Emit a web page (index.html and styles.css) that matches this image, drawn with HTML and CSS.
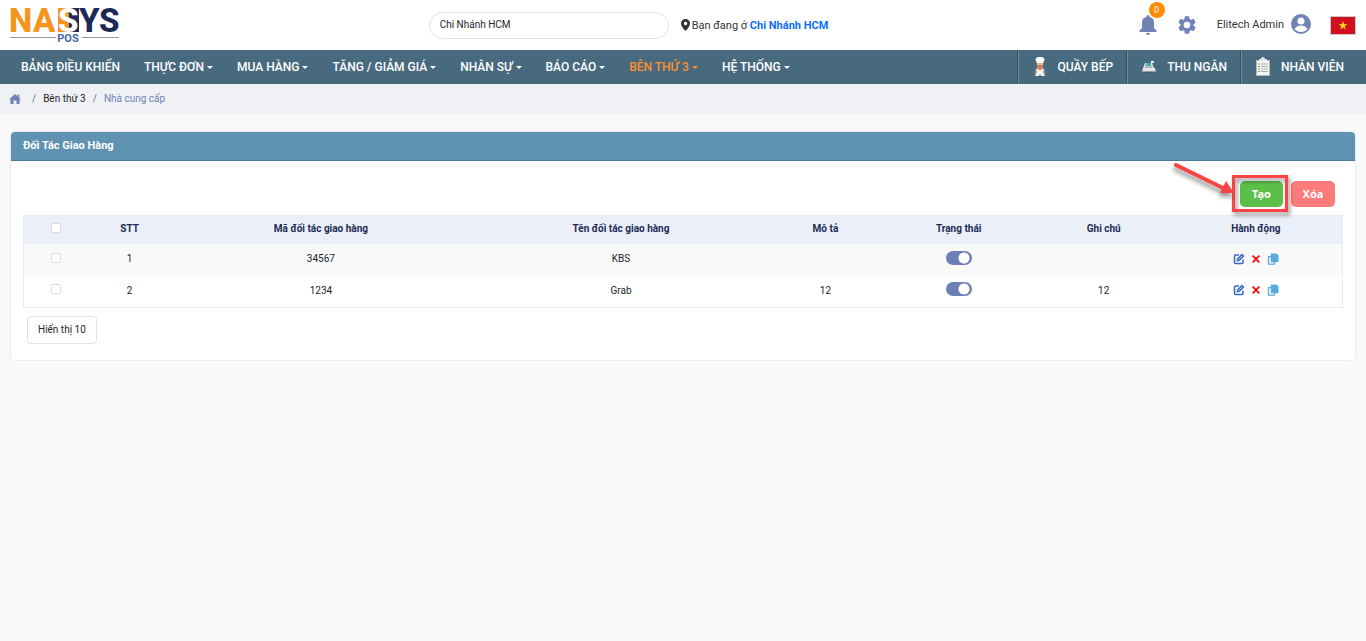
FILE: index.html
```html
<!DOCTYPE html>
<html lang="vi">
<head>
<meta charset="utf-8">
<meta name="viewport" content="width=device-width, initial-scale=1">
<title>Đối Tác Giao Hàng</title>
<link rel="stylesheet" href="styles.css">
</head>
<body>
<svg class="defs" width="0" height="0" aria-hidden="true">
  <symbol id="edit" viewBox="0 0 24 24"><path d="M12 4H5a2 2 0 0 0-2 2v13a2 2 0 0 0 2 2h13a2 2 0 0 0 2-2v-6" fill="none" stroke="currentColor" stroke-width="3"/><path d="M7 17l1-6L18 1l5 5-10 10z" fill="currentColor"/><path d="M10.500 13.500l8-8" stroke="#fff" stroke-width="1.500"/></symbol>
  <symbol id="cross" viewBox="0 0 24 24"><path d="M4 4l16 16M20 4L4 20" stroke="currentColor" stroke-width="4" fill="none"/></symbol>
  <symbol id="copy" viewBox="0 0 24 24"><path d="M8 7H3v15h12v-4" fill="none" stroke="currentColor" stroke-width="2.500" stroke-linejoin="round"/><path d="M9 1h10l4 4v12a1.500 1.500 0 0 1-1.500 1.500H9A1.500 1.500 0 0 1 7.500 17V2.500A1.500 1.500 0 0 1 9 1z" fill="currentColor"/></symbol>
</svg>
<header class="topbar">
  <a class="logo" href="#" aria-label="NASYS POS">
    <svg width="114" height="50" viewBox="0 0 114 50">
      <g class="logo-word">
        <text x="0" y="32" fill="#f7941d">N</text>
        <text x="24" y="32" fill="#f7941d">A</text>
        <path d="M49 8h11v24H49z" fill="#f7941d"/>
        <path d="M60 8h10v24H60z" fill="#1d2a57"/>
        <text x="49" y="32" fill="#fff">S</text>
        <text x="70" y="32" fill="#1d2a57">Y</text>
        <text x="90" y="32" fill="#1d2a57">S</text>
      </g>
      <path d="M1 37.500h46M73 37.500h37" stroke="#8e99ad"/>
      <text class="logo-sub" x="59" y="42" text-anchor="middle">POS</text>
    </svg>
  </a>
  <div class="branch">
    <input class="branch-input" type="text" value="Chi Nhánh HCM" aria-label="Chi nhánh">
    <svg class="pin" width="9" height="12" viewBox="0 0 18 24"><path fill-rule="evenodd" d="M9 0a9 9 0 0 1 9 9c0 6-9 15-9 15S0 15 0 9a9 9 0 0 1 9-9zm0 5.500a3.500 3.500 0 1 0 0 7 3.500 3.500 0 0 0 0-7z" fill="#333"/></svg>
    <span class="branch-note">Bạn đang ở <a href="#">Chi Nhánh HCM</a></span>
  </div>
  <div class="tools">
    <button class="icon-btn bell" type="button" aria-label="Thông báo">
      <svg width="18" height="20" viewBox="0 0 18 20"><path d="M9 0a1.500 1.500 0 0 1 1.500 1.500v.6A5.500 5.500 0 0 1 15 7.500V13l2.500 2.500V17H.5v-1.500L3 13V7.500a5.500 5.500 0 0 1 4.500-5.400v-.6A1.500 1.500 0 0 1 9 0zM7 18h4a2 2 0 0 1-4 0z" fill="#7082b8"/></svg>
      <span class="badge">0</span>
    </button>
    <button class="icon-btn" type="button" aria-label="Cài đặt">
      <svg width="22" height="22" viewBox="0 0 24 24"><path fill="#7082b8" d="M19.140 12.940c.04-.3.060-.61.060-.94 0-.32-.02-.64-.07-.94l2.030-1.580a.49.49 0 0 0 .12-.61l-1.920-3.320a.488.488 0 0 0-.59-.22l-2.390.96c-.5-.38-1.030-.7-1.620-.94L14.400 2.810a.484.484 0 0 0-.48-.41h-3.840c-.24 0-.43.17-.47.41L9.250 5.350c-.59.24-1.130.57-1.620.94l-2.390-.96a.49.49 0 0 0-.59.22L2.740 8.870c-.12.21-.08.47.12.61l2.030 1.580c-.05.3-.09.63-.09.94s.02.64.07.94l-2.030 1.580a.49.49 0 0 0-.12.61l1.920 3.320c.12.22.37.29.59.22l2.390-.96c.5.38 1.030.7 1.620.94l.36 2.540c.05.24.24.41.48.41h3.840c.24 0 .44-.17.47-.41l.36-2.540c.59-.24 1.130-.56 1.620-.94l2.390.96c.22.08.47 0 .59-.22l1.920-3.320a.49.49 0 0 0-.12-.61zM12 15.600a3.600 3.600 0 1 1 0-7.200 3.600 3.600 0 0 1 0 7.200z"/></svg>
    </button>
    <button class="user" type="button">Elitech Admin
      <svg width="20" height="20" viewBox="0 0 20 20"><circle cx="10" cy="10" r="10" fill="#7082b8"/><circle cx="10" cy="7" r="3.500" fill="#fff"/><path d="M3.500 15c1.500-2.500 4-3.500 6.500-3.500s5 1 6.500 3.500c-1.500 2-4 3-6.500 3s-5-1-6.500-3z" fill="#fff"/></svg>
    </button>
    <button class="icon-btn" type="button" aria-label="Tiếng Việt">
      <svg width="26" height="19" viewBox="0 0 26 19"><path d="M0 0h26v19H0z" fill="#c9c9cd"/><path d="M1 1h24v17H1z" fill="#d0101f"/><path d="M13 5l1.100 3.300h3.400l-2.800 2 1.100 3.300-2.800-2-2.800 2 1.100-3.300-2.800-2h3.400z" fill="#ffde17"/></svg>
    </button>
  </div>
</header>

<nav class="nav">
  <ul class="menu">
    <li><a href="#">BẢNG ĐIỀU KHIỂN</a></li>
    <li><a class="drop" href="#">THỰC ĐƠN</a></li>
    <li><a class="drop" href="#">MUA HÀNG</a></li>
    <li><a class="drop" href="#">TĂNG / GIẢM GIÁ</a></li>
    <li><a class="drop" href="#">NHÂN SỰ</a></li>
    <li><a class="drop" href="#">BÁO CÁO</a></li>
    <li><a class="drop active" href="#">BÊN THỨ 3</a></li>
    <li><a class="drop" href="#">HỆ THỐNG</a></li>
  </ul>
  <ul class="stations">
    <li><a href="#">
      <svg width="14" height="20" viewBox="0 0 14 20"><path d="M3.500 6V4.500A2 2 0 0 1 3.500 1a4.500 4.500 0 0 1 7 0 2 2 0 0 1 0 3.500V6z" fill="#fff"/><path d="M4 6h6v3.500a3 3 0 0 1-6 0z" fill="#f0b48a"/><path d="M4 8.500h6v1H4z" fill="#8a4b2a"/><path d="M3 12l4-1 4 1 .5 4.500h-9z" fill="#f3f3f3"/><path d="M4.500 10.500h5L7 13.500z" fill="#e5533d"/><path d="M2.500 12l1.500 2.500-1 2M11.500 12L10 14.500l1 2" stroke="#d98d62" fill="none"/><path d="M3 16h8l1 3H8l-1-1.500L6 19H2z" fill="#e9edf2"/></svg>
      QUẦY BẾP</a></li>
    <li><a href="#">
      <svg width="14" height="12" viewBox="0 0 14 12"><path d="M3 2h7l2 5H1z" fill="#d5dde2"/><path d="M4 2h5v3H4z" fill="#3fb7a3"/><path d="M9 0h3v2H9z" fill="#e8f3f2"/><path d="M3 6h7" stroke="#8f9da5"/><path d="M1 7h12l1 4H0z" fill="#e4e6e8"/><path d="M0 11h14" stroke="#4b5459"/></svg>
      THU NGÂN</a></li>
    <li><a href="#">
      <svg width="16" height="20" viewBox="0 0 16 20"><path d="M1 3h14v16H1z" fill="#b9b5ab"/><path d="M2 4h12v14H2z" fill="#f5f5f3"/><path d="M4 4V2h2a2 2 0 0 1 4 0h2v2z" fill="#dfe5e8"/><path d="M6 7h7M6 9.500h7M6 12h7M6 14.500h7" stroke="#a9adaf"/><path d="M3 7h2M3 12h2" stroke="#d97862"/><path d="M3 9.500h2M3 14.500h2" stroke="#6aa06a"/></svg>
      NHÂN VIÊN</a></li>
  </ul>
</nav>

<ol class="crumbs">
  <li><a href="#" aria-label="Trang chủ"><svg width="12" height="10" viewBox="0 0 12 10"><path d="M6 0l6 5.500h-1.500V10h-3V6.500h-3V10h-3V5.500H0z" fill="#7082b8"/><path d="M8.500.5h1.800V4L8.500 2.500z" fill="#7082b8"/></svg></a></li>
  <li><a href="#">Bên thứ 3</a></li>
  <li class="current">Nhà cung cấp</li>
</ol>

<main class="card">
  <h1 class="card-head">Đối Tác Giao Hàng</h1>
  <div class="card-body">
    <div class="actions">
      <div class="create-wrap">
        <button class="btn create" type="button">Tạo</button>
        <span class="frame"></span>
        <svg class="arrow" width="64" height="38" viewBox="0 0 64 38"><path d="M2 3l47 23" stroke="#fb4444" stroke-width="4" stroke-linecap="round"/><path d="M60 31l-14 0 6-12z" fill="#fb4444"/></svg>
      </div>
      <button class="btn delete" type="button">Xóa</button>
    </div>
    <table class="grid">
      <colgroup><col class="c-check"><col class="c-no"><col class="c-code"><col class="c-name"><col class="c-desc"><col class="c-state"><col class="c-note"><col></colgroup>
      <thead>
        <tr><th><input type="checkbox" aria-label="Chọn tất cả"></th><th>STT</th><th>Mã đối tác giao hàng</th><th>Tên đối tác giao hàng</th><th>Mô tả</th><th>Trạng thái</th><th>Ghi chú</th><th>Hành động</th></tr>
      </thead>
      <tbody>
        <tr>
          <td><input type="checkbox" aria-label="Chọn KBS"></td><td>1</td><td>34567</td><td>KBS</td><td></td>
          <td><input class="switch" type="checkbox" role="switch" checked aria-label="Trạng thái KBS"></td><td></td>
          <td><div class="row-actions"><button class="edit" type="button" aria-label="Sửa"><svg width="12" height="12"><use href="#edit"/></svg></button><button class="remove" type="button" aria-label="Xóa"><svg width="10" height="10"><use href="#cross"/></svg></button><button class="copy" type="button" aria-label="Sao chép"><svg width="12" height="12"><use href="#copy"/></svg></button></div></td>
        </tr>
        <tr>
          <td><input type="checkbox" aria-label="Chọn Grab"></td><td>2</td><td>1234</td><td>Grab</td><td>12</td>
          <td><input class="switch" type="checkbox" role="switch" checked aria-label="Trạng thái Grab"></td><td>12</td>
          <td><div class="row-actions"><button class="edit" type="button" aria-label="Sửa"><svg width="12" height="12"><use href="#edit"/></svg></button><button class="remove" type="button" aria-label="Xóa"><svg width="10" height="10"><use href="#cross"/></svg></button><button class="copy" type="button" aria-label="Sao chép"><svg width="12" height="12"><use href="#copy"/></svg></button></div></td>
        </tr>
      </tbody>
    </table>
    <button class="page-size" type="button">Hiển thị 10</button>
  </div>
</main>
</body>
</html>
```
FILE: styles.css
```css
* { box-sizing: border-box; }
body {
  margin: 0;
  background: #f9f9f9;
  color: #212529;
  font-family: Roboto, "Liberation Sans", sans-serif;
  font-size: 11px;
}
a { color: inherit; text-decoration: none; }
button { font: inherit; color: inherit; border: 0; background: none; padding: 0; }
ul, ol { list-style: none; margin: 0; padding: 0; }
svg { display: block; flex: none; }
.defs { position: absolute; }

.topbar {
  display: grid;
  grid-template-columns: 1fr auto 1fr;
  align-items: center;
  min-height: 50px;
  padding: 0 10px 0 9px;
  background: #fff;
}
.logo { justify-self: start; }
.logo-word { font-family: Roboto, sans-serif; font-weight: 800; font-size: 33px; }
.logo-sub { font-family: Roboto, sans-serif; font-weight: 700; font-size: 11px; fill: #4a66a8; }
.branch { display: flex; align-items: center; margin-right: 108px; }
.branch-input {
  width: 240px;
  height: 27px;
  padding: 0 10px 2px;
  border: 1px solid #dee2e6;
  border-radius: 14px;
  background: #fff;
  color: #212529;
  font: 10px Roboto, sans-serif;
}
.pin { margin: 0 2px 0 12px; }
.branch-note { color: #333; }
.branch-note a { color: #0d6efd; font-weight: 700; }
.tools { display: flex; align-items: center; justify-content: flex-end; gap: 19px; }
.icon-btn { position: relative; }
.badge {
  position: absolute;
  top: -13px;
  left: 10px;
  width: 16px;
  height: 16px;
  border-radius: 50%;
  background: #ff8c00;
  color: #fff;
  font-size: 9px;
  line-height: 16px;
  text-align: center;
}
.user { display: flex; align-items: center; gap: 7px; color: #333; padding-bottom: 2px; }

.nav {
  display: flex;
  justify-content: space-between;
  background: #486a7e;
  color: #fff;
  font-size: 12px;
  font-weight: 500;
  line-height: 34px;
}
.menu { display: flex; gap: 24px; padding-left: 21px; }
.menu a { display: flex; align-items: center; gap: 3px; }
.drop::after {
  content: "";
  border: 3px solid transparent;
  border-top-color: currentColor;
  border-bottom: 0;
}
.active { color: #ff8f2b; }
.stations { display: flex; }
.stations a {
  display: flex;
  align-items: center;
  gap: 11px;
  height: 34px;
  padding: 0 13px 0 15px;
  border-left: 1px solid #33505f;
  box-shadow: inset 1px 0 #6b8b9d;
}
.stations li:last-child a { gap: 10px; padding: 0 22px 0 14px; }

.crumbs {
  display: flex;
  align-items: center;
  min-height: 30px;
  padding: 0 9px;
  background: #f0f1f5;
  border-bottom: 1px solid #f4f4f6;
  font-size: 10px;
}
.crumbs li { display: flex; align-items: center; }
.crumbs li + li::before { content: "/"; padding: 0 7px; color: #6c757d; }
.crumbs li:nth-child(2)::before { padding-left: 11px; }
.current { color: #7082b8; }

.card {
  margin: 17px 10px;
  border: 1px solid #ededee;
  border-radius: 5px;
  background: #fff;
}
.card-head {
  margin: 0;
  padding: 0 12px;
  border-bottom: 1px solid #4b7b9a;
  border-radius: 4px 4px 0 0;
  background: #6092b1;
  color: #fff;
  font-size: 11px;
  font-weight: 700;
  line-height: 28px;
}
.card-body { padding: 20px 12px 16px; }
.actions { display: flex; justify-content: flex-end; gap: 8px; padding-right: 8px; margin-bottom: 8px; }
.btn {
  display: block;
  width: 44px;
  height: 26px;
  padding-bottom: 2px;
  border-radius: 5px;
  color: #fff;
  font: 700 11px "Noto Sans", sans-serif;
}
.create { width: 43px; background: #5cbf4a; }
.delete { background: #ff7a7a; }
.create-wrap { position: relative; }
.frame {
  position: absolute;
  inset: -6px -5px -5px -8px;
  border: 3px solid #fb4444;
  filter: drop-shadow(2px 3px 2px rgb(0 0 0 / 45%));
}
.arrow {
  position: absolute;
  right: 45px;
  bottom: 7px;
  filter: drop-shadow(-1px 4px 2px rgb(0 0 0 / 40%));
}

.grid {
  width: 100%;
  table-layout: fixed;
  border-collapse: collapse;
  border: 1px solid #ebebed;
  font-size: 10px;
  text-align: center;
}
.grid th, .grid td { height: 32px; padding: 0 0 2px; vertical-align: middle; }
.grid th { height: 28px; background: #eaeff8; color: #1d2b57; font-weight: 700; }
.grid tbody tr:first-child { background: #f9f9f9; }
.c-check { width: 4.9%; }
.c-no { width: 6.3%; }
.c-code { width: 22.7%; }
.c-name { width: 22.8%; }
.c-desc { width: 8.2%; }
.c-state { width: 12%; }
.c-note { width: 10%; }
.grid input {
  appearance: none;
  display: block;
  width: 10px;
  height: 10px;
  margin: 0 auto 2px;
  border: 1px solid #dcdde0;
  border-radius: 2px;
  background: #fff;
}
.grid .switch {
  width: 26px;
  height: 14px;
  border: 0;
  border-radius: 7px;
  background: radial-gradient(circle at 18px 7px, #fff 5px, #6d80b5 6px);
}
.row-actions { display: flex; align-items: center; justify-content: center; gap: 6px; }
.edit { color: #3765cf; }
.remove { color: #f30000; }
.copy { color: #58a9de; }
.page-size {
  height: 28px;
  margin: 8px 4px 0;
  padding: 0 10px 2px;
  border: 1px solid #dee2e6;
  border-radius: 4px;
  background: #fff;
  font-size: 10px;
}
```
